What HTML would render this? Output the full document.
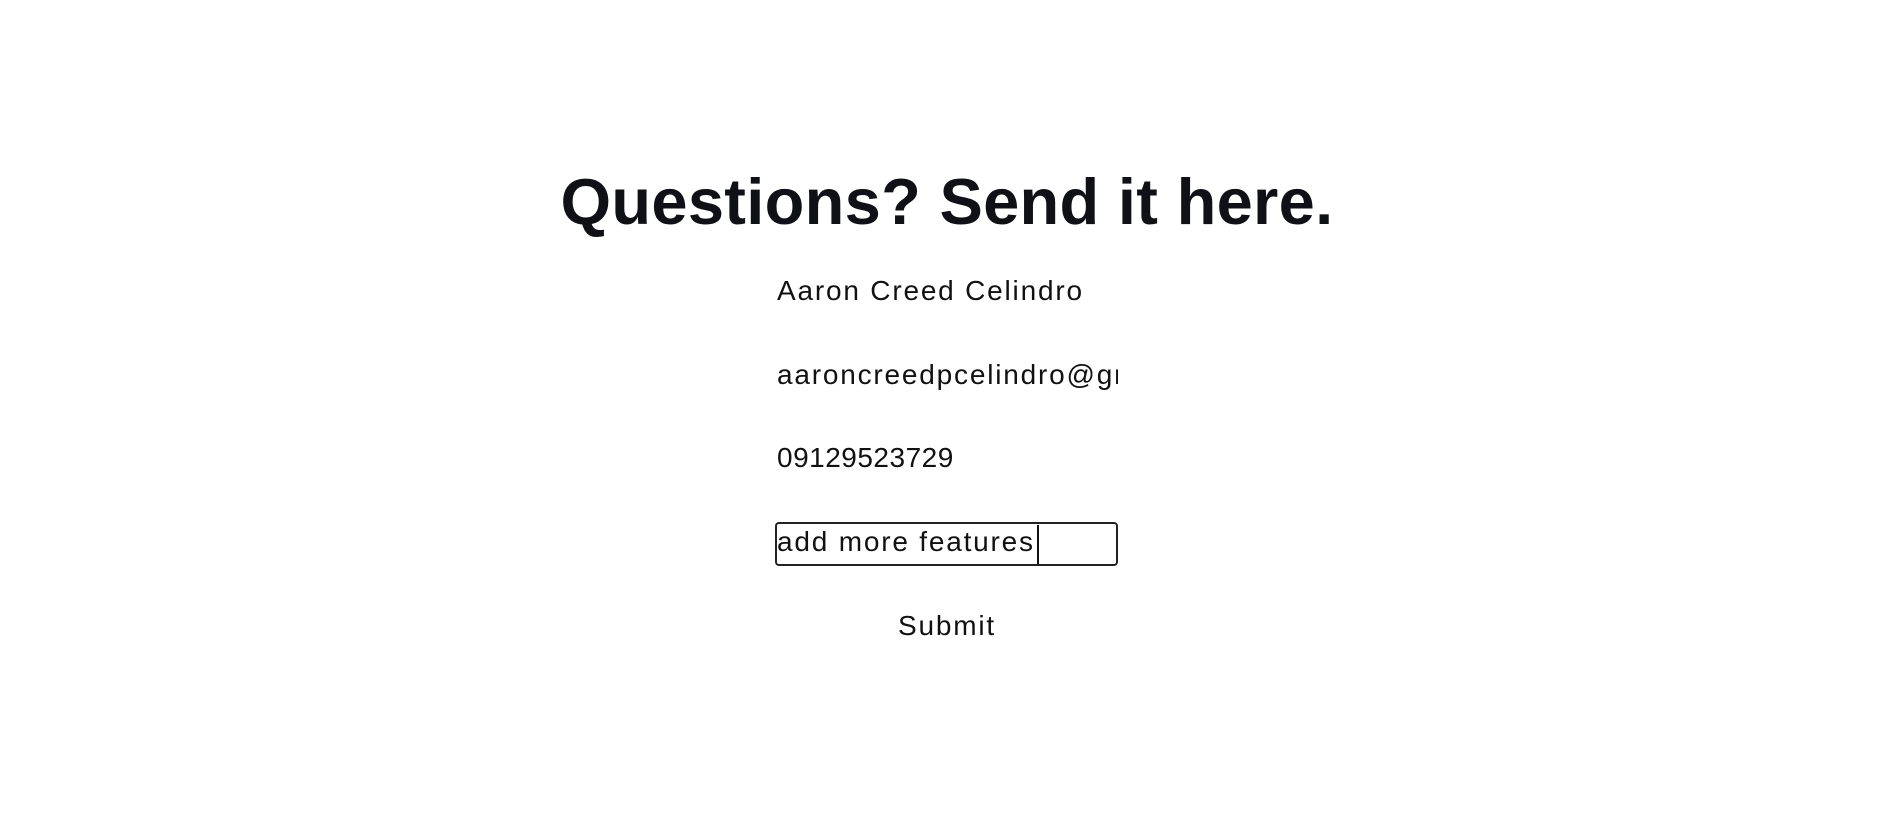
<!DOCTYPE html>
<html><head><meta charset="utf-8"><style>
html,body{margin:0;width:1894px;height:815px;background:#fff;overflow:hidden}
body{position:relative;font-family:"Liberation Sans",sans-serif;color:#111}
h1{position:absolute;left:0;width:1894px;top:162px;margin:0;text-align:center;font-size:65px;font-weight:bold;color:#0f1116;line-height:80px;letter-spacing:0.3px}
.t{position:absolute;left:777px;font-size:28px;line-height:34px;white-space:nowrap;color:#111;letter-spacing:1.8px}
.box{position:absolute;left:775px;top:522px;width:339px;height:40px;border:2.5px solid #222;border-radius:4px}
.cur{position:absolute;left:1037px;top:525px;width:2px;height:39px;background:#111}
</style></head><body>
<h1>Questions? Send it here.</h1>
<div class="t" style="top:274px">Aaron Creed Celindro</div>
<div class="t" style="top:358px;width:341px;overflow:hidden">aaroncreedpcelindro@gmail.com</div>
<div class="t" style="top:441px;letter-spacing:0.5px">09129523729</div>
<div class="box"></div>
<div class="t" style="top:525px">add more features</div>
<div class="cur"></div>
<div class="t" style="top:609px;left:898px">Submit</div>
</body></html>
